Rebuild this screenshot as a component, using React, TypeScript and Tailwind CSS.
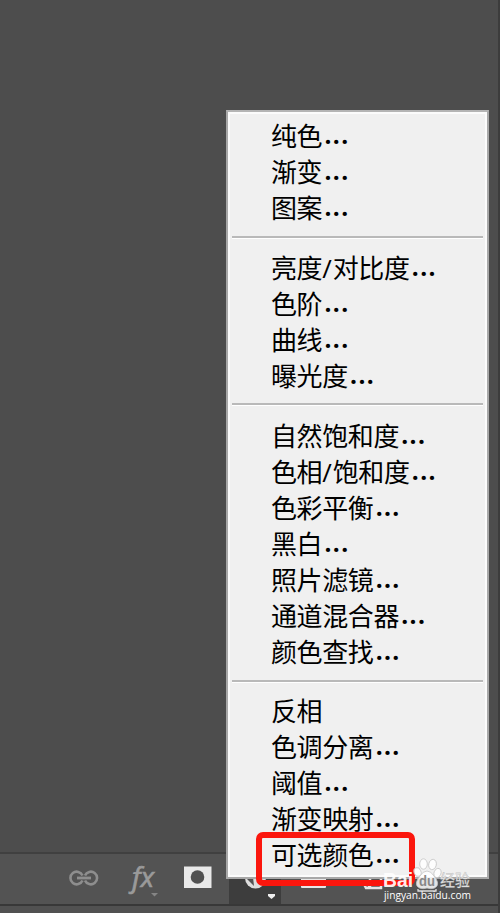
import React from "react";

type Group = string[];

const groups: Group[] = [
  ["纯色...", "渐变...", "图案..."],
  ["亮度/对比度...", "色阶...", "曲线...", "曝光度..."],
  ["自然饱和度...", "色相/饱和度...", "色彩平衡...", "黑白...", "照片滤镜...", "通道混合器...", "颜色查找..."],
  ["反相", "色调分离...", "阈值...", "渐变映射...", "可选颜色..."],
];

function MenuItem({ label }: { label: string }) {
  const dots = label.endsWith("...");
  const name = dots ? label.slice(0, -3) : label;
  return (
    <li className="flex h-9 items-start whitespace-nowrap pl-[43px] text-[26px] leading-9 tracking-[-0.4px] text-black">
      <span>
        {name.split("/").map((part, i) => (
          <React.Fragment key={part}>
            {i > 0 && <span className="tracking-[1px]">/</span>}
            {part}
          </React.Fragment>
        ))}
      </span>
      {dots && (
        <span className="pl-[2px] font-['Noto_Sans',sans-serif] text-[27px] font-semibold leading-8 tracking-[0.9px]">...</span>
      )}
    </li>
  );
}

function Separator() {
  return <div className="mx-[4px] h-[3px] border-b border-white bg-[#b9b9b9]" />;
}

function Menu() {
  return (
    <div className="absolute left-[226px] top-[110px] h-[769px] w-[263px] border-2 border-[#a8a8a8] border-t-[#b4b4b4] bg-[#f0f0f0] shadow-[inset_0_0_0_2px_#fbfbfb]">
      <ul className="pt-[6px]">
        {groups[0].map((l) => <MenuItem key={l} label={l} />)}
      </ul>
      <div className="pt-[10px] pb-[11px]"><Separator /></div>
      <ul>{groups[1].map((l) => <MenuItem key={l} label={l} />)}</ul>
      <div className="pt-[9px] pb-[12px]"><Separator /></div>
      <ul>{groups[2].map((l) => <MenuItem key={l} label={l} />)}</ul>
      <div className="pt-[10px] pb-[10px]"><Separator /></div>
      <ul>{groups[3].map((l) => <MenuItem key={l} label={l} />)}</ul>
    </div>
  );
}

function Toolbar() {
  return (
    <div className="relative flex h-[54px] shrink-0 border-y-2 border-t-[#404040] border-b-[#383838] bg-[#535353]">
      <svg className="h-[50px] w-[229px] shrink-0" viewBox="0 0 229 50" fill="none">
        <g stroke="#8e8e8e" strokeWidth="2.6">
          <path d="M82.500 21.500A6.300 6.300 0 1 0 82.500 26.500M85 21.500A6.300 6.300 0 1 1 85 26.500" />
          <path d="M77 24H91" strokeWidth="2.800" />
        </g>
        <text x="132" y="33" fill="#9a9a9a" stroke="#9a9a9a" strokeWidth=".7" fontFamily="Open Sans" fontStyle="italic" fontSize="27" textLength="22" lengthAdjust="spacingAndGlyphs">fx</text>
        <path d="M151 39H158L154.5 42.500Z" fill="#858585" />
        <path d="M184 12.500H211.500V34H184Z" fill="#e9e9e9" />
        <circle cx="197.500" cy="23" r="6.800" fill="#515151" />
      </svg>
      <svg className="h-[50px] w-[52px] bg-[#3d3d3d]" viewBox="229 0 52 50">
        <circle cx="255.500" cy="24" r="10.500" fill="#dedede" />
        <path d="M252 14 244 22 254 32Z" fill="#535353" />
        <path d="M268 40H275V42L271.500 45 268 42Z" fill="#eee" />
      </svg>
      <svg className="h-[50px] w-[110px]" viewBox="281 0 110 50">
        <path d="M301 18H326V33Q326 34 325 34H302Q301 34 301 33Z" fill="#e7e7e7" />
        <path d="M364 30H369V34H366ZM370 18H381V34H370Z" fill="none" stroke="#e7e7e7" strokeWidth="2.500" />
      </svg>
    </div>
  );
}

function Watermark() {
  return (
    <div className="absolute left-[382px] top-[858px] h-[48px] w-[91px] text-white">
      <svg className="h-full w-full overflow-visible" viewBox="382 858 91 48">
        <g fill="#fff" fillOpacity=".85" stroke="#c4c4c4" strokeWidth=".8">
          <ellipse cx="417.500" cy="872" rx="3.500" ry="4.500" transform="rotate(-20 417.5 872)" />
          <ellipse cx="423.500" cy="864" rx="3.800" ry="5.200" />
          <ellipse cx="432.500" cy="864.500" rx="3.800" ry="5.200" transform="rotate(12 432.5 864.5)" />
          <ellipse cx="437.500" cy="873" rx="3.500" ry="4.700" transform="rotate(20 437.5 873)" />
          <path d="M427 871Q431 871 434 876Q439 882 437 886Q434 890 427 888Q420 890 417 886Q415 882 420 876Q423 871 427 871Z" />
          <path d="M418 889V891H436V889" fill="none" stroke="#e0e0e0" strokeWidth="1.300" />
        </g>
        <g fontFamily="Liberation Sans, sans-serif" fill="#fff">
          <text x="383" y="886.500" fontSize="20" fontWeight="700" fillOpacity=".93" textLength="30" lengthAdjust="spacingAndGlyphs">Bai</text>
          <text x="419" y="886" fontSize="14" fontWeight="700" fill="#888" textLength="16" lengthAdjust="spacingAndGlyphs">du</text>
          <text x="440" y="886" fontSize="15.500" fontFamily="Noto Sans CJK SC" fontWeight="500" fill="#e0e0e0" stroke="#aaa" strokeWidth=".25" textLength="30" lengthAdjust="spacingAndGlyphs">经验</text>
          <text x="384" y="898.500" fontSize="10" fontFamily="Open Sans" textLength="87" lengthAdjust="spacingAndGlyphs">jingyan.baidu.com</text>
        </g>
      </svg>
    </div>
  );
}

export default function App() {
  return (
    <main className="relative flex h-[913px] w-[500px] flex-col overflow-hidden bg-[#4d4d4d] font-['Open_Sans','Noto_Sans_CJK_SC',sans-serif]">
      <div className="h-[852px] shrink-0 bg-[#4d4d4d]" />
      <Toolbar />
      <div className="flex-1 bg-[#515151]" />
      <div className="absolute right-0 top-0 h-full w-[2px] bg-[#3c3c3c]" />
      <Menu />
      <div className="absolute left-[256px] top-[832px] h-[54px] w-[159px] rounded-[7px] border-[6px] border-[#fb160d]" />
      <Watermark />
    </main>
  );
}
